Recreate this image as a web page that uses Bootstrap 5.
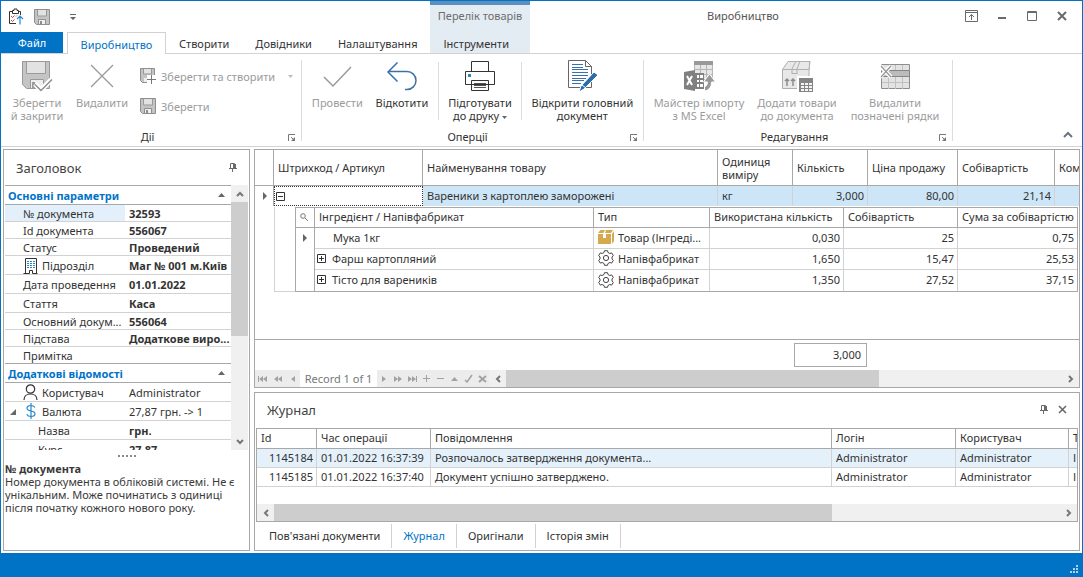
<!DOCTYPE html>
<html lang="uk">
<head>
<meta charset="utf-8">
<meta name="viewport" content="width=device-width, initial-scale=1">
<title>Виробництво</title>
<link href="https://cdn.jsdelivr.net/npm/bootstrap@5.3.0/dist/css/bootstrap.min.css" rel="stylesheet">
<style>
:root{--blue:#0173c7;--line:#a8a8a8;--soft:#d2d2d2;--ink:#333;--dim:#9b9b9b;--track:#f0f0f0;--thumb:#cdcdcd}
body{font-family:"Noto Sans","Open Sans",sans-serif;font-size:11px;line-height:13px;color:var(--ink);background:#fff}
button{font:inherit;color:inherit;background:none;border:0;padding:0}
button:disabled{color:var(--dim)}
svg{display:block;flex:none}
a{color:inherit;text-decoration:none}
table{border-collapse:separate;border-spacing:0;table-layout:fixed;width:100%}
th{font-weight:400;text-align:left}
th,td{white-space:nowrap;overflow:hidden;padding:0 4px;vertical-align:middle}
.shell{border:1px solid var(--blue);border-bottom:0}
/* title bar and tabs */
.titlebar{height:31px}
.quick{width:429px;padding-left:6px;gap:10px}
.quick .more{margin-left:10px}
.context-title{width:100px;border-top:4px solid #5b8fc0;background:#e3ebf3;color:#6d6d6d;padding-top:4px}
.caption-text{color:#555;padding:0 9px 2px 0}
.win-buttons{width:117px;padding-right:15px;padding-bottom:1px;color:#6a6a6a}
.tabs{height:22px;border-bottom:1px solid var(--soft);padding:0}
.tabs a{display:flex;align-items:center;height:21px;padding:2px 13px 0}
.tabs .file-tab{width:62px;background:var(--blue);color:#fff;justify-content:center;padding:0;margin-right:4px}
.tabs .current{width:99px;height:22px;padding:1px 0 0;justify-content:center;color:var(--blue);border:1px solid var(--soft);border-bottom:0;background:#fff}
.tabs .context-tab{width:100px;background:#e3ebf3}
/* ribbon */
.ribbon{height:93px;border-bottom:1px solid var(--soft);padding-top:6px}
.rgroup{height:81px;border-right:1px solid #dcdcdc;position:relative}
.rgroup .tools{height:70px}
.big{display:flex;flex-direction:column;align-items:center;gap:4px;white-space:nowrap}
.g1{width:301px;padding-left:6px}.g2{width:342px;padding-left:3px}.g3{width:309px;padding-left:6px}
.w60{width:60px}.w64{width:65px}.w70{width:70px}.w82{width:82px}.w98{width:98px}.w122{width:122px}
.divider{width:1px;height:58px;background:#dcdcdc;margin-top:2px}
.gcaption{height:13px;text-align:center;padding-right:13px}
.launch{position:absolute;right:5px;bottom:-1px;color:#777}
.small-tools{gap:14px;padding:8px 0 0 3px}
.small-tool{display:flex;align-items:center;gap:5px;height:16px}
/* panels */
.work{padding:2px 2px 2px;gap:4px;min-height:0}
.panel{border:1px solid var(--line);background:#fff}
.panel-head{height:35px;padding:0 12px;font-size:13px;line-height:16px;color:#444}
.panel-head button{color:#6a6a6a}
.side{width:247px;flex:none}
.props{margin:0 1px;flex:1 1 0;overflow:hidden;min-height:0}
.props table{border-top:1px solid var(--line)}
.props td,.props th{height:17px;border-bottom:1px solid var(--soft);padding:0 0 0 18px}
.props td{padding:0 0 0 4px;font-weight:700}
.props .tall td,.props .tall th{height:19px}
.props .plain td{font-weight:400}
.props .cat th{height:19px;border-color:var(--line);color:var(--blue);font-weight:700;padding:0 6px 0 3px}
.props .cat svg{color:#666}
.props .before th,.props .before td{border-color:var(--line)}
.props .picked th{background:#e3f0fb}
.props .sub th{padding-left:33px}
.props .open th{padding-left:4px}
.vbar{width:17px;flex:none;background:var(--track);color:#777}
.vbar button,.hbar button{width:17px;height:17px;display:flex;align-items:center;justify-content:center;background:var(--track);flex:none}
.vthumb{height:134px;background:var(--thumb)}
.grip{height:12px;flex:none;gap:2px;padding-top:5px}
.grip i{width:2px;height:2px;background:#8a8a8a}
.help{height:88px;flex:none;padding:0 1px;color:#3a3a3a}
/* product grid */
.goods th{height:36px;border-right:1px solid var(--line);border-bottom:1px solid var(--line)}
.goods th:last-child{border-right:0}
.goods th.wrap{white-space:normal}
.goods .hit td{height:20px;background:#cde6f7;border-right:1px solid var(--soft);padding-bottom:2px}
.goods .hit td.mark-cell{background:#fff;padding:0 6px 0 0;border-color:var(--line)}
.goods .hit td:last-child{border-right:0}
.goods .hit .focus-cell{background:#fff;border:1px dotted #333;padding:0 1px}
.goods td.holder{padding:1px 1px 0 0}
.nest-wrap{border-left:1px solid var(--soft);padding-left:20px;border-bottom:1px solid var(--soft)}
.nest{border:1px solid var(--line);margin-bottom:-1px;position:relative}
.nest th{height:20px;padding-bottom:2px}
.nest td{height:21px;border-right:1px solid var(--soft);border-bottom:1px solid var(--soft);padding-bottom:2px}
.nest td:first-child{border-right-color:var(--line);border-bottom:0;padding-right:7px}
.nest td:last-child,.nest th:last-child{border-right:0}
.nest tr:last-child td{border-bottom:0}
.nest td:nth-child(2){padding-left:2px}
.nest .leaf{padding-left:16px}
.nest .branch{gap:6px}
.num{text-align:right;padding:0 3px 0 0}
.totals{height:31px;border-top:1px solid var(--line);padding:3px 212px 0 0}
.total-box{width:73px;height:24px;border:1px solid var(--line);padding:0 5px 1px}
.hbar{height:17px;background:var(--track);color:#777}
.navset{color:#a2a2a2;background:#ececec}
.navset button{width:15px;background:none}
.navset.after button{width:14px}
.record{width:77px;background:#fff}
.hthumb{background:var(--thumb);height:17px}
/* journal */
.log{height:159px;flex:none}
.log .panel-head{padding-bottom:2px;gap:10px}
.log-frame{border:1px solid var(--line);margin:0 1px;height:94px}
.log-frame th{height:20px;border-right:1px solid var(--line);border-bottom:1px solid var(--line);padding-bottom:2px}
.log-frame td{height:19px;border-right:1px solid var(--soft);border-bottom:1px solid var(--soft);padding-bottom:2px}
.log-frame th:last-child,.log-frame td:last-child{border-right:0}
.log-frame .hit td{background:#e4f1fb}
.log-tabs{height:28px;padding:2px 0 2px 3px}
.log-tabs a{display:flex;align-items:center;padding:0 11px 1px;border-right:1px solid var(--soft)}
.log-tabs a.on{color:var(--blue)}
.status{height:24px;background:var(--blue)}
.right-side{min-width:0}
</style>
</head>
<body>
<svg width="0" height="0" class="position-absolute" aria-hidden="true">
  <defs>
    <symbol id="disk" viewBox="0 0 16 16"><path d="M.5.5h15v15H2.500L.5 13.500z" fill="#c4c4c4" stroke="#8e8e8e"/><path d="M3.500 1v6h9V1" fill="#e2e2e2" stroke="#999"/><path d="M4.500 15.500v-5h7v5z" fill="#f0f0f0" stroke="#8e8e8e"/><path d="M6 12h2v3H6z" fill="#8e8e8e"/></symbol>
    <symbol id="launch" viewBox="0 0 8 8"><path d="M.5 7V.5H7M3 3l3 3" fill="none" stroke="currentColor"/><path d="M7 3v4H3z" fill="currentColor"/></symbol>
    <symbol id="pin" viewBox="0 0 8 9"><path d="M1.500 5V.5h4V5M0 5.500h8M3.500 6v3" fill="none" stroke="currentColor"/><path d="M4 1h3v4H4z" fill="currentColor"/></symbol>
    <symbol id="up" viewBox="0 0 8 6"><path d="M1 5l3-3 3 3" fill="none" stroke="currentColor" stroke-width="2"/></symbol>
    <symbol id="tri" viewBox="0 0 4 8"><path d="M0 0v8l4-4z" fill="currentColor"/></symbol>
    <symbol id="triup" viewBox="0 0 7 4"><path d="M0 4h7L3.500 0z" fill="currentColor"/></symbol>
    <symbol id="plus" viewBox="0 0 9 9"><path d="M.5.5h8v8h-8zM2 4.500h5M4.500 2v5" fill="none" stroke="#333"/></symbol>
    <symbol id="gear" viewBox="0 0 16 16"><path d="M6 2.500L6.500.7h3L10 2.500l1.800 1 1.900-.6 1.600 2.700L14 7v2l1.300 1.400-1.600 2.700-1.900-.6-1.800 1-.5 1.800h-3L6 13.500l-1.800-1-1.900.6L.7 10.400 2 9V7L.7 5.600l1.600-2.700 1.900.6z" fill="#fff" stroke="#444"/><circle cx="8" cy="8" r="2.600" fill="none" stroke="#444"/></symbol>
  </defs>
</svg>
<div class="shell d-flex flex-column vh-100">
  <header>
    <div class="titlebar d-flex">
      <div class="quick d-flex align-items-center">
        <button aria-label="Документ"><svg width="17" height="18" viewBox="0 0 17 18"><path d="M9 15.500H2.500v-12h3M11 3.500h2.500V7M5.500 5.500v-3h1.500V1h3v1.500h1.500v3z" fill="none" stroke="#333"/><path d="M4 8l1.500 1.500L7.500 7.500M4 12l1.500 1.500L7.500 11.500M9 8.500l1-1" fill="none" stroke="#e23b3b"/><path d="M13 16.500V8M10 11l3-3 3 3" fill="none" stroke="#2a88cc" stroke-width="1.200"/></svg></button>
        <button aria-label="Зберегти документ"><svg width="16" height="16"><use href="#disk"/></svg></button>
        <button class="more" aria-label="Панель швидкого доступу"><svg width="6" height="6" viewBox="0 0 6 6"><path d="M0 0h6v1H0zM0 3h6L3 6z" fill="#666"/></svg></button>
      </div>
      <div class="context-title text-center">Перелік товарів</div>
      <div class="flex-fill d-flex align-items-center justify-content-center caption-text">Виробництво</div>
      <div class="win-buttons d-flex align-items-center justify-content-between">
        <button aria-label="Стрічка"><svg width="13" height="12" viewBox="0 0 13 12"><path d="M.5.5h12v11H.5zM1 2.500h11M6.500 10V4.500M4 7l2.500-2.500L9 7" fill="none" stroke="currentColor"/></svg></button>
        <button aria-label="Згорнути"><svg width="9" height="12" viewBox="0 0 9 12"><path d="M0 7h8v2H0z" fill="currentColor"/></svg></button>
        <button aria-label="Розгорнути"><svg width="10" height="10" viewBox="0 0 10 10"><path d="M.5.5h9v9h-9zM0 1.500h10" fill="none" stroke="currentColor"/></svg></button>
        <button aria-label="Закрити"><svg width="10" height="10" viewBox="0 0 10 10"><path d="M1 1l8 8M9 1L1 9" stroke="currentColor" stroke-width="2"/></svg></button>
      </div>
    </div>
    <nav class="tabs d-flex">
      <a href="#" class="file-tab">Файл</a><a href="#" class="current">Виробництво</a><a href="#">Створити</a><a href="#">Довідники</a><a href="#">Налаштування</a><a href="#" class="context-tab">Інструменти</a>
    </nav>
    <div class="ribbon d-flex">
      <section class="rgroup g1">
        <div class="tools d-flex align-items-start">
          <button class="big w60" disabled><svg width="32" height="32" viewBox="0 0 32 32"><path d="M1.500 1.500h27v27H5.500l-4-4z" fill="#c4c4c4" stroke="#9a9a9a"/><path d="M5.500 2v11.500h19V2" fill="#e2e2e2" stroke="#9a9a9a"/><path d="M9.500 28.500v-9h13v9z" fill="#eee" stroke="#9a9a9a"/><path d="M11 22h3v6h-3z" fill="#9a9a9a"/><path d="M14 24l6 6 11-11" fill="none" stroke="#fff" stroke-width="5"/><path d="M14 24.500l6 6L31 19.500" fill="none" stroke="#8e8e8e" stroke-width="1.500"/></svg><span>Зберегти<br>й закрити</span></button>
          <button class="big w70" disabled><svg width="32" height="32" viewBox="0 0 32 32"><path d="M5 5l22 22M27 5L5 27" stroke="#9a9a9a" stroke-width="1.300"/></svg><span>Видалити</span></button>
          <div class="small-tools d-flex flex-column">
            <button class="small-tool" disabled><svg width="16" height="16" viewBox="0 0 16 16"><path d="M.5.5h14v14H2.500l-2-2z" fill="#c4c4c4" stroke="#8e8e8e"/><path d="M3.500 1v5h8V1" fill="#e2e2e2" stroke="#999"/><path d="M4 10h4v4H4z" fill="#eee"/><path d="M7 7h9v9H7z" fill="#fff"/><path d="M7 11.500h9M11.500 7v9" stroke="#777"/></svg>Зберегти та створити<svg class="ms-2" width="5" height="3" viewBox="0 0 5 3"><path d="M0 0h5L2.500 3z" fill="#bbb"/></svg></button>
            <button class="small-tool" disabled><svg width="16" height="16"><use href="#disk"/></svg>Зберегти</button>
          </div>
        </div>
        <div class="gcaption">Дії</div><button class="launch" aria-label="Параметри дій"><svg width="8" height="8"><use href="#launch"/></svg></button>
      </section>
      <section class="rgroup g2">
        <div class="tools d-flex align-items-start">
          <button class="big w64" disabled><svg width="32" height="32" viewBox="0 0 32 32"><path d="M3 17l9 9L30 7" fill="none" stroke="#9a9a9a" stroke-width="1.500"/></svg><span>Провести</span></button>
          <button class="big w64"><svg width="32" height="32" viewBox="0 0 32 32"><path d="M11.500 2.500L2 12l9.500 9.500M2 11.500h19c5 0 9 4 9 9s-4 9-9 9h-2" fill="none" stroke="#3c70a8" stroke-width="1.500"/></svg><span>Відкотити</span></button>
          <div class="divider ms-1"></div>
          <button class="big w82"><svg width="32" height="32" viewBox="0 0 32 32"><path d="M7.500 11.500v-10h17v10M1.500 11.500h29v13h-29zM7.500 20.500h17v10h-17z" fill="#fff" stroke="#333"/><path d="M10 23.500h12M10 25.500h12M10 27.500h12" stroke="#555"/><path d="M4 14h3v3H4z" fill="#2185ca"/></svg><span>Підготувати<br>до друку <svg class="d-inline-block align-middle" width="5" height="3" viewBox="0 0 5 3"><path d="M0 0h5L2.500 3z" fill="#666"/></svg></span></button>
          <div class="divider"></div>
          <button class="big w122"><svg width="32" height="32" viewBox="0 0 32 32"><path d="M2.500.5h17l6 6v21h-23z" fill="#fff" stroke="#666"/><path d="M19.500.5v6h6" fill="none" stroke="#666"/><path d="M6 4.500h11M6 7.500h11M6 9.500h16M6 12.500h16M6 15.500h16M6 18.500h14M6 20.500h12M6 23.500h9" stroke="#3971aa"/><path d="M13 32l2-6L28 12l4 3-14 14z" fill="#2b6cab" stroke="#fff"/><path d="M16 25l4 3" stroke="#fff"/></svg><span>Відкрити головний<br>документ</span></button>
        </div>
        <div class="gcaption">Оперції</div><button class="launch" aria-label="Параметри операцій"><svg width="8" height="8"><use href="#launch"/></svg></button>
      </section>
      <section class="rgroup g3">
        <div class="tools d-flex align-items-start">
          <button class="big w98" disabled><svg width="32" height="32" viewBox="0 0 32 32"><path d="M11.500 1.500h18v18h-18z" fill="#e6e6e6" stroke="#b5b5b5"/><path d="M11 1h19v4H11z" fill="#999"/><path d="M12 9.500h17M12 14.500h17M17.500 5v14M23.500 5v14" stroke="#b5b5b5"/><path d="M1 12l11-2v21L1 29z" fill="#808080"/><path d="M12 13h9v16h-9z" fill="#808080"/><path d="M14 15h2v3h-2zM17 15h3v3h-3zM14 20h2v2h-2zM17 20h3v2h-3zM14 24h2v3h-2zM17 24h3v3h-3z" fill="#fff"/><path d="M4 16l5 9M9 16l-5 9" stroke="#fff" stroke-width="2"/><path d="M26.500 14l6 8h-4c0 5-2 8-7 9v-4c2-1 3-3 3-5h-4z" fill="#999" stroke="#fff"/></svg><span>Майстер імпорту<br>з MS Excel</span></button>
          <button class="big w98" disabled><svg width="32" height="32" viewBox="0 0 32 32"><path d="M1.500 9.500L7 1.500h22l-1 8v19h-26.500z" fill="#e8e8e8" stroke="#b0b0b0"/><path d="M1 9.500h27M28.500 9.500l0-8M11 14V9l4-8M16 14V9l3-8M11 13.500h5" fill="none" stroke="#b0b0b0"/><path d="M6 26v-7M4 21l2-2 2 2M12 26v-7M10 21l2-2 2 2" fill="none" stroke="#8d8d8d" stroke-width="1.500"/><path d="M16 16h16v16H16z" fill="#fff"/><path d="M18 18h14v14H18z" fill="#858585"/><path d="M20 23h3v2h-3zM24 23h3v2h-3zM28 23h3v2h-3zM20 26h3v2h-3zM24 26h3v2h-3zM28 26h3v2h-3zM20 29h3v2h-3zM24 29h3v2h-3zM28 29h3v2h-3z" fill="#f4f4f4"/></svg><span>Додати товари<br>до документа</span></button>
          <button class="big w98" disabled><svg width="32" height="32" viewBox="0 0 32 32"><path d="M2.500 4.500h28v24h-28z" fill="#e3e3e3" stroke="#8d8d8d"/><path d="M9.500 5v24M16.500 5v24M23.500 5v24M3 22.500h27" stroke="#c0c0c0"/><path d="M3 10.500h27.500v6H3z" fill="#bbb" stroke="#858585"/><path d="M1 6l11 11M12 6L1 17" stroke="#fff" stroke-width="4"/><path d="M2 6l10 11M12 6L2 17" stroke="#999" stroke-width="1.300"/></svg><span>Видалити<br>позначені рядки</span></button>
        </div>
        <div class="gcaption">Редагування</div><button class="launch" aria-label="Параметри редагування"><svg width="8" height="8"><use href="#launch"/></svg></button>
      </section>
      <button class="ms-auto align-self-end mb-2 me-2 text-secondary" aria-label="Згорнути стрічку"><svg width="12" height="7" viewBox="0 0 12 7"><path d="M2 6l4-4 4 4" fill="none" stroke="currentColor" stroke-width="2"/></svg></button>
    </div>
  </header>

  <main class="work d-flex flex-fill">
    <aside class="panel side d-flex flex-column">
      <div class="panel-head d-flex align-items-center justify-content-between"><span>Заголовок</span><button aria-label="Закріпити"><svg width="8" height="9"><use href="#pin"/></svg></button></div>
      <div class="props d-flex">
        <div class="flex-fill overflow-hidden">
        <table>
          <colgroup><col style="width:120px"><col></colgroup>
          <tr class="cat"><th colspan="2"><span class="d-flex align-items-center justify-content-between">Основні параметри<svg width="7" height="4"><use href="#triup"/></svg></span></th></tr>
          <tr class="picked"><th>№ документа</th><td>32593</td></tr>
          <tr><th>Id документа</th><td>556067</td></tr>
          <tr><th>Статус</th><td>Проведений</td></tr>
          <tr class="tall"><th><span class="d-flex align-items-center gap-1"><svg width="15" height="17" viewBox="0 0 15 17"><path d="M2.500 16V1.500h11V16M.5 16.500h6v-3h3v3h5" fill="#fff" stroke="#333"/><path d="M4 4.500h8M4 6.500h8M4 8.500h8M4 10.500h8" stroke="#2b86c5" stroke-dasharray="2 1"/></svg>Підрозділ</span></th><td>Маг № 001 м.Київ</td></tr>
          <tr class="tall"><th>Дата проведення</th><td>01.01.2022</td></tr>
          <tr class="tall"><th>Стаття</th><td>Каса</td></tr>
          <tr><th>Основний докум...</th><td>556064</td></tr>
          <tr><th>Підстава</th><td>Додаткове виро...</td></tr>
          <tr class="before"><th>Примітка</th><td></td></tr>
          <tr class="cat"><th colspan="2"><span class="d-flex align-items-center justify-content-between">Додаткові відомості<svg width="7" height="4"><use href="#triup"/></svg></span></th></tr>
          <tr class="tall plain"><th><span class="d-flex align-items-center gap-1"><svg width="15" height="16" viewBox="0 0 15 16"><circle cx="7.500" cy="5" r="4.200" fill="none" stroke="#333" stroke-width="1.200"/><path d="M1 16c0-4 3-6 6.500-6s6.500 2 6.500 6" fill="none" stroke="#333" stroke-width="1.200"/></svg>Користувач</span></th><td>Administrator</td></tr>
          <tr class="tall open plain"><th><span class="d-flex align-items-center"><svg width="7" height="7" viewBox="0 0 7 7"><path d="M7 1v6H1z" fill="#666"/></svg><svg class="ms-2 me-1" width="14" height="16" viewBox="0 0 14 16"><path d="M11 4.500C10 3 9 2.500 7 2.500c-2.500 0-4 1-4 2.700C3 9 11 7 11 10.800c0 1.700-1.500 2.700-4 2.700-2.200 0-3.500-.8-4.300-2.300M7 0v16" fill="none" stroke="#2487cb" stroke-width="1.200"/></svg>Валюта</span></th><td>27,87 грн. -&gt; 1</td></tr>
          <tr class="tall sub"><th>Назва</th><td>грн.</td></tr>
          <tr class="tall sub"><th>Курс</th><td>27,87</td></tr>
        </table>
        </div>
        <div class="vbar d-flex flex-column"><button aria-label="Вгору"><svg width="8" height="6"><use href="#up"/></svg></button><div class="vthumb"></div><button class="mt-auto" aria-label="Вниз"><svg width="8" height="6" viewBox="0 0 8 6"><path d="M1 1l3 3 3-3" fill="none" stroke="currentColor" stroke-width="2"/></svg></button></div>
      </div>
      <div class="grip d-flex justify-content-center"><i></i><i></i><i></i><i></i><i></i></div>
      <div class="help"><b>№ документа</b><br>Номер документа в обліковій системі. Не є унікальним. Може починатись з одиниці після початку кожного нового року.</div>
    </aside>

    <div class="right-side d-flex flex-column flex-fill gap-1">
      <section class="panel d-flex flex-column flex-fill overflow-hidden">
        <div class="flex-fill">
        <table class="goods">
          <colgroup><col style="width:19px"><col style="width:149px"><col><col style="width:75px"><col style="width:75px"><col style="width:90px"><col style="width:97px"><col style="width:24px"></colgroup>
          <thead><tr><th></th><th>Штрихкод / Артикул</th><th>Найменування товару</th><th class="wrap">Одиниця виміру</th><th>Кількість</th><th>Ціна продажу</th><th>Собівартість</th><th class="pe-0">Ком</th></tr></thead>
          <tbody>
          <tr class="hit"><td class="mark-cell"><svg class="ms-auto" width="4" height="8" color="#666"><use href="#tri"/></svg></td><td class="focus-cell"><button aria-label="Згорнути рядок"><svg width="9" height="9" viewBox="0 0 9 9"><path d="M.5.5h8v8h-8zM2 4.500h5" fill="none" stroke="#333"/></svg></button></td><td>Вареники з картоплею заморожені</td><td>кг</td><td class="num">3,000</td><td class="num">80,00</td><td class="num">21,14</td><td></td></tr>
          <tr><td></td><td class="holder" colspan="7"><div class="nest-wrap">
            <table class="nest">
              <colgroup><col style="width:19px"><col><col style="width:116px"><col style="width:134px"><col style="width:114px"><col style="width:119px"></colgroup>
              <thead><tr><th><svg width="8" height="8" viewBox="0 0 8 8"><circle cx="3" cy="3" r="2.300" fill="none" stroke="#777"/><path d="M5 5l3 3" stroke="#777"/></svg></th><th>Інгредієнт / Напівфабрикат</th><th>Тип</th><th>Використана кількість</th><th>Собівартість</th><th class="pe-0">Сума за собівартістю</th></tr></thead>
              <tbody>
              <tr><td><svg class="ms-auto" width="4" height="8" color="#666"><use href="#tri"/></svg></td><td><span class="d-block leaf">Мука 1кг</span></td><td><span class="d-flex align-items-center gap-1"><svg width="16" height="16" viewBox="0 0 16 16"><path d="M0 4l2.500-3H7L5.500 4zM7 4l1-3h7l-2 3zM0 5h5v4h3V5h5v10H0zM14 5l2-3v10l-2 3z" fill="#d6a94f"/></svg>Товар (Інгреді...</span></td><td class="num">0,030</td><td class="num">25</td><td class="num">0,75</td></tr>
              <tr><td></td><td><span class="d-flex align-items-center branch"><button aria-label="Розгорнути рядок"><svg width="9" height="9"><use href="#plus"/></svg></button>Фарш картопляний</span></td><td><span class="d-flex align-items-center gap-1"><svg width="16" height="16"><use href="#gear"/></svg>Напівфабрикат</span></td><td class="num">1,650</td><td class="num">15,47</td><td class="num">25,53</td></tr>
              <tr><td></td><td><span class="d-flex align-items-center branch"><button aria-label="Розгорнути рядок"><svg width="9" height="9"><use href="#plus"/></svg></button>Тісто для вареників</span></td><td><span class="d-flex align-items-center gap-1"><svg width="16" height="16"><use href="#gear"/></svg>Напівфабрикат</span></td><td class="num">1,350</td><td class="num">27,52</td><td class="num">37,15</td></tr>
              </tbody>
            </table></div></td></tr>
          </tbody>
        </table>
        </div>
        <div class="totals d-flex justify-content-end"><div class="total-box d-flex align-items-center justify-content-end">3,000</div></div>
        <div class="hbar d-flex">
          <div class="navset d-flex"><button aria-label="Перший"><svg width="9" height="6" viewBox="0 0 9 6"><path d="M0 0h1v6H0zM5 0v6L1 3zM9 0v6L5 3z" fill="currentColor"/></svg></button><button aria-label="Попередня сторінка"><svg width="8" height="6" viewBox="0 0 8 6"><path d="M4 0v6L0 3zM8 0v6L4 3z" fill="currentColor"/></svg></button><button aria-label="Попередній"><svg width="4" height="6" viewBox="0 0 4 6"><path d="M4 0v6L0 3z" fill="currentColor"/></svg></button></div>
          <div class="record d-flex align-items-center justify-content-center">Record 1 of 1</div>
          <div class="navset after d-flex"><button aria-label="Наступний"><svg width="4" height="6" viewBox="0 0 4 6"><path d="M0 0v6l4-3z" fill="currentColor"/></svg></button><button aria-label="Наступна сторінка"><svg width="8" height="6" viewBox="0 0 8 6"><path d="M0 0v6l4-3zM4 0v6l4-3z" fill="currentColor"/></svg></button><button aria-label="Останній"><svg width="9" height="6" viewBox="0 0 9 6"><path d="M0 0v6l4-3zM4 0v6l4-3zM8 0h1v6H8z" fill="currentColor"/></svg></button><button aria-label="Додати"><svg width="7" height="7" viewBox="0 0 7 7"><path d="M0 3.500h7M3.500 0v7" stroke="currentColor"/></svg></button><button aria-label="Вилучити"><svg width="7" height="7" viewBox="0 0 7 7"><path d="M0 3.500h7" stroke="currentColor"/></svg></button><button aria-label="Редагувати"><svg width="7" height="4"><use href="#triup"/></svg></button><button aria-label="Прийняти"><svg width="9" height="9" viewBox="0 0 9 9"><path d="M1 6l2 2 5-7" fill="none" stroke="currentColor" stroke-width="1.500"/></svg></button><button aria-label="Скасувати"><svg width="9" height="8" viewBox="0 0 9 8"><path d="M1 1l7 6M8 1L1 7" stroke="currentColor" stroke-width="2"/></svg></button></div>
          <button aria-label="Ліворуч"><svg width="6" height="8" viewBox="0 0 6 8"><path d="M5 1L2 4l3 3" fill="none" stroke="currentColor" stroke-width="2"/></svg></button>
          <div class="flex-fill"><div class="hthumb" style="width:67%"></div></div>
          <button aria-label="Праворуч"><svg width="6" height="8" viewBox="0 0 6 8"><path d="M1 1l3 3-3 3" fill="none" stroke="currentColor" stroke-width="2"/></svg></button>
        </div>
      </section>

      <section class="panel log d-flex flex-column">
        <div class="panel-head d-flex align-items-center"><span class="flex-fill">Журнал</span><button aria-label="Закріпити"><svg width="8" height="9"><use href="#pin"/></svg></button><button aria-label="Закрити панель"><svg width="9" height="9" viewBox="0 0 9 9"><path d="M1 1l7 7M8 1L1 8" stroke="#666" stroke-width="1.500"/></svg></button></div>
        <div class="log-frame d-flex flex-column justify-content-between">
          <table>
            <colgroup><col style="width:60px"><col style="width:114px"><col><col style="width:124px"><col style="width:113px"><col style="width:8px"></colgroup>
            <thead><tr><th>Id</th><th>Час операції</th><th>Повідомлення</th><th>Логін</th><th>Користувач</th><th>Т</th></tr></thead>
            <tbody>
            <tr class="hit"><td class="num">1145184</td><td>01.01.2022 16:37:39</td><td>Розпочалось затвердження документа...</td><td>Administrator</td><td>Administrator</td><td>І</td></tr>
            <tr><td class="num">1145185</td><td>01.01.2022 16:37:40</td><td>Документ успішно затверджено.</td><td>Administrator</td><td>Administrator</td><td>І</td></tr>
            </tbody>
          </table>
          <div class="hbar d-flex"><button aria-label="Ліворуч"><svg width="6" height="8" viewBox="0 0 6 8"><path d="M5 1L2 4l3 3" fill="none" stroke="currentColor" stroke-width="2"/></svg></button><div class="flex-fill"><div class="hthumb" style="width:71%"></div></div><button aria-label="Праворуч"><svg width="6" height="8" viewBox="0 0 6 8"><path d="M1 1l3 3-3 3" fill="none" stroke="currentColor" stroke-width="2"/></svg></button></div>
        </div>
        <nav class="log-tabs d-flex"><a href="#">Пов'язані документи</a><a href="#" class="on">Журнал</a><a href="#">Оригінали</a><a href="#">Історія змін</a></nav>
      </section>
    </div>
  </main>
  <footer class="status d-flex align-items-end justify-content-end p-1"><svg width="8" height="8" viewBox="0 0 8 8"><path d="M6 0h2v2H6zM3 3h2v2H3zM6 3h2v2H6zM0 6h2v2H0zM3 6h2v2H3zM6 6h2v2H6z" fill="#b9cfe4"/></svg></footer>
</div>
<script src="https://cdn.jsdelivr.net/npm/bootstrap@5.3.0/dist/js/bootstrap.bundle.min.js"></script>
</body>
</html>
